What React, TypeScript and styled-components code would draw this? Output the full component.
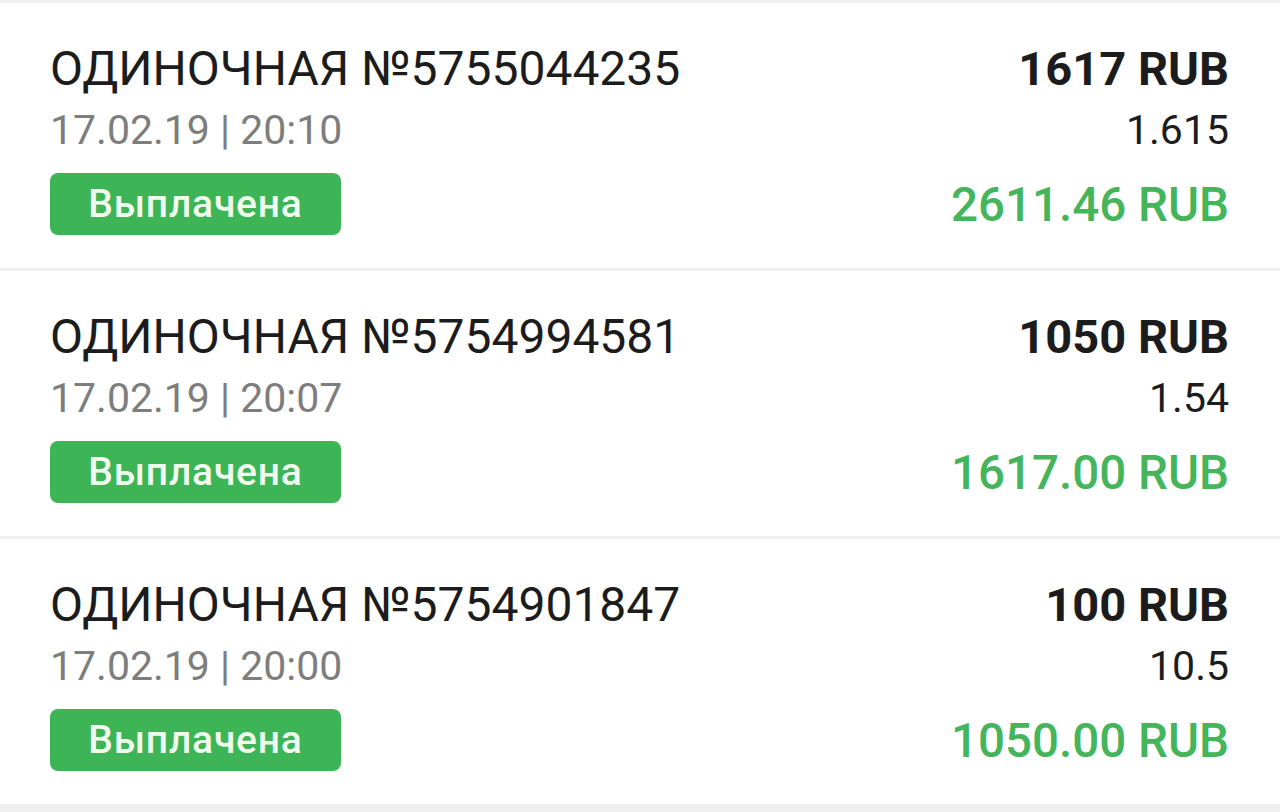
import React from "react";
import styled, { createGlobalStyle } from "styled-components";

const GlobalStyle = createGlobalStyle`
  html, body { margin: 0; padding: 0; background: #efefef; }
  body { font-family: Roboto, "Noto Sans", sans-serif; -webkit-font-smoothing: antialiased; }
`;

const List = styled.div`
  display: flex;
  flex-direction: column;
  gap: 3px;
  padding: 3px 0 7px;
  background: #efefef;
`;

const Row = styled.div`
  height: 265px;
  box-sizing: border-box;
  background: #ffffff;
  display: flex;
  justify-content: space-between;
  padding: 36px 51px 0 50px;
`;

const Left = styled.div`
  display: flex;
  flex-direction: column;
  align-items: flex-start;
`;

const Right = styled.div`
  display: flex;
  flex-direction: column;
  align-items: flex-end;
`;

const Title = styled.div`
  font-size: 48px;
  line-height: 60px;
  color: #1c1c1c;
  font-weight: 400;
`;

const DateText = styled.div`
  font-size: 41px;
  line-height: 48px;
  margin-top: 7px;
  color: #7d7d7d;
`;

const Badge = styled.div`
  margin-top: 19px;
  width: 291px;
  height: 62px;
  border-radius: 8px;
  background: #3db556;
  color: #f0fbee;
  font-size: 39px;
  font-weight: 500;
  letter-spacing: 0.8px;
  display: flex;
  align-items: center;
  justify-content: center;
`;

const Stake = styled.div`
  font-size: 47px;
  line-height: 60px;
  font-weight: 700;
  color: #1c1c1c;
`;

const Coef = styled.div`
  font-size: 41px;
  line-height: 48px;
  margin-top: 7px;
  color: #1c1c1c;
`;

const Win = styled.div`
  font-size: 47.5px;
  line-height: 60px;
  margin-top: 21px;
  font-weight: 500;
  color: #45b55b;
`;

const bets = [
  { id: "5755044235", date: "17.02.19 | 20:10", stake: "1617 RUB", coef: "1.615", win: "2611.46 RUB" },
  { id: "5754994581", date: "17.02.19 | 20:07", stake: "1050 RUB", coef: "1.54", win: "1617.00 RUB" },
  { id: "5754901847", date: "17.02.19 | 20:00", stake: "100 RUB", coef: "10.5", win: "1050.00 RUB" },
];

export default function App() {
  return (
    <>
      <GlobalStyle />
      <List>
        {bets.map((b) => (
          <Row key={b.id}>
            <Left>
              <Title>ОДИНОЧНАЯ №{b.id}</Title>
              <DateText>{b.date}</DateText>
              <Badge>Выплачена</Badge>
            </Left>
            <Right>
              <Stake>{b.stake}</Stake>
              <Coef>{b.coef}</Coef>
              <Win>{b.win}</Win>
            </Right>
          </Row>
        ))}
      </List>
    </>
  );
}
